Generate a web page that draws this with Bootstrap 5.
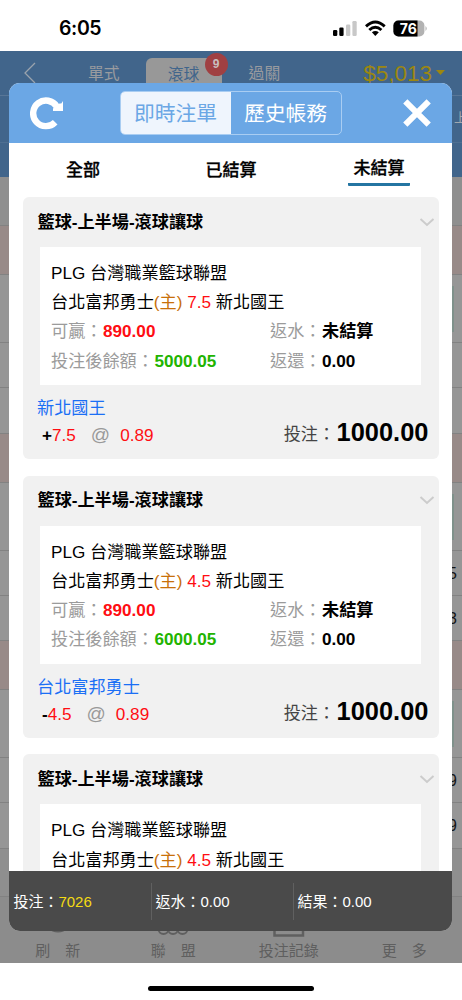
<!DOCTYPE html>
<html lang="zh-TW">
<head>
<meta charset="utf-8">
<meta name="viewport" content="width=device-width, initial-scale=1">
<title>即時注單</title>
<link rel="stylesheet" href="https://cdn.jsdelivr.net/npm/bootstrap@5.3.0/dist/css/bootstrap.min.css">
<style>
body{font-family:"Liberation Sans","Noto Sans CJK TC",sans-serif;font-size:17.15px;line-height:29px;color:#000;background:#fff}
.phone{width:462px;height:1000px}
.statusbar{height:51px;font-family:Inter,"Liberation Sans",sans-serif}
.clock{font-size:19.5px;font-weight:600;padding-left:59px;padding-top:5px;letter-spacing:-.4px}
.signals{padding-right:34px;padding-top:4px}
.app{height:912px;background:#969696}
.app-blue{height:126px;background:#41658b}
.app-nav{height:45px;padding-left:24px;font-size:15.8px;line-height:22px;color:#999b9f;border-bottom:1px solid #587697}
.app-sub{height:47px;border-bottom:1px solid #4e6f92;font-size:13px;color:#a0a8b0;padding-top:7px}
.nav-pill{width:76px;height:39px;background:#989898;color:#41658b;border-radius:6px 6px 0 0;margin-left:26px}
.count{right:-6px;top:-5px;width:23px;height:23px;background:#a04042;color:#c9bebe;font:bold 12px/23px "Liberation Sans",sans-serif}
.balance{font-size:22.5px;color:#9c8710;margin-left:83px;padding-top:2px}
.rowline{border-bottom:1px solid #828282;font-size:16px;color:#151515}
.rowline.pinkish{background:#988a88}
.rowline.plain{background:#8f8f8f}
.rowline.num{padding:8px 5px 0 0}
.teal::after{content:"";width:2px;height:46px;background:#7f918b;margin-right:8px}
.h49{height:49px}.h48{height:48px}.h68{height:68px}.h45{height:45px}.h46{height:46px}
.app-tabs{flex:1;background:#8c8c8c;color:#5f5f5f;font-size:15px;line-height:22px}
.app-tabs svg{display:block;margin:3px auto 0}
.homebar{height:37px;padding-top:23px}
.homebar div{width:166px;height:5px;border-radius:3px;background:#000}
.sheet{left:9.4px;top:83px;width:443px;height:848px;border-radius:11px;background:#fff}
.sheet-head{height:60px;background:#6ba7e5}
.seg{width:222px;height:44px;border:1px solid #a9cdf2;border-radius:5px;font-size:20.8px;line-height:43px;color:#fff;left:110.6px;top:8px}
.seg>div{padding-right:1px}
.seg .on{background:#eff5fd;color:#6ba7e5}
.filter{height:54px;font-weight:500;font-size:17px;-webkit-text-stroke:.3px #000}
.filter>div{padding-top:13px}
.filter>div:not(.cur){padding-right:1px}
.filter .cur{padding-top:11px}
.filter .cur span{display:inline-block;width:62px;height:32px;border-bottom:3px solid #2475a2;border-radius:1px}
.tickets{height:674px;padding:0 13px 0 13.6px}
.ticket{height:262.4px;margin-bottom:16.3px;border-radius:6px;background:#f1f1f1;flex:none}
.ticket-head{height:50px;padding:10.6px 4px 0 14.5px;font-weight:bold}
.ticket-head svg{margin-top:10px}
.slip{margin:0 18px 0 17.5px;height:138px;padding:12px 0 0 10.5px;background:#fff;line-height:29.2px}
.slip b{margin-left:.6px}
.tag{color:#9b9b9b}
.left-col{width:219px}
.pick{padding:9px 11px 0 14px}
.pick-name{color:#1b6ff5}
.pick-line{line-height:27px;height:26px;margin-top:-2px}
.pick-odds{padding-left:5px}
.stake-tag{color:#444;margin-right:1.5px}
.rd{color:#ff0d12}.gn{color:#22b400}.host{color:#c8700a}
.at{color:#999;font-size:19px;margin:0 10px 0 15px}
.stake{font-size:25.4px;margin-top:-2px}
.sheet-foot{height:60px;background:#4a4a4a;color:#fff;font-size:15px;line-height:37px;padding:12px 0 11px 0}
.sheet-foot>div{width:142px;padding-left:4px}
.sheet-foot>div+div{border-left:1px solid #606060;padding-left:3px}
.gold{color:#f4da13}
</style>
</head>
<body>
<div class="phone position-relative overflow-hidden d-flex flex-column">
  <div class="statusbar d-flex justify-content-between align-items-center">
    <div class="clock">6:05</div>
    <svg class="signals" width="129" height="24" viewBox="0 0 95 20">
      <rect x="0" y="12" width="4.3" height="6" rx="1.2"/><rect x="6.3" y="9.5" width="4.3" height="8.5" rx="1.2"/>
      <rect x="13" y="6.5" width="4.3" height="11.5" rx="1.2" fill="#c8c8c8"/><rect x="19.4" y="3" width="4.3" height="15" rx="1.2" fill="#c8c8c8"/>
      <g fill="none" stroke="#000" stroke-width="2.9"><path d="M33 8.4Q42.3-.3 51.7 8.4"/><path d="M36.3 12Q42.3 6.4 48.4 12"/></g><path d="M38.9 14.3Q42.3 11.7 45.8 14.3L42.3 18z"/>
      <rect x="60.4" y="2.5" width="31" height="16" rx="5" fill="#b2b2b2"/><path d="M65.4 2.5H84.5V18.5H65.4A5 5 0 0 1 60.4 13.5V7.5A5 5 0 0 1 65.4 2.5z"/><path d="M92.5 8Q95 10.5 92.5 13z" fill="#b2b2b2"/>
      <text x="75.3" y="15.6" font-size="14" font-weight="700" fill="#fff" text-anchor="middle">76</text>
    </svg>
  </div>

  <div class="app d-flex flex-column">
    <div class="app-blue">
      <div class="app-nav d-flex align-items-center">
        <svg width="12" height="22" fill="none" stroke="#9aa3ad" stroke-width="1.3"><path d="M11 1 1 11 11 21"/></svg>
        <div style="margin-left:52px;padding-top:2px">單式</div>
        <div class="nav-pill position-relative text-center mt-2"><div style="padding-top:6px">滾球</div><span class="count position-absolute rounded-circle text-center">9</span></div>
        <div style="margin-left:27px;padding-top:2px">過關</div>
        <div class="balance">$5,013</div>
        <svg width="10" height="6" style="margin-left:4px"><path d="M0 0h9L4.5 5z" fill="#9c8710"/></svg>
      </div>
      <div class="app-sub text-end overflow-hidden"><span style="margin-right:-5px">上</span></div>
    </div>
    <div class="rowline plain h49"></div>
    <div class="rowline pinkish h49"></div>
    <div class="rowline h68 teal d-flex justify-content-end align-items-center"></div>
    <div class="rowline h45"></div>
    <div class="rowline h46"></div>
    <div class="rowline pinkish h49"></div>
    <div class="rowline h68 teal d-flex justify-content-end align-items-center"></div>
    <div class="rowline h45 text-end num">5</div>
    <div class="rowline h45 text-end num">3</div>
    <div class="rowline pinkish h49"></div>
    <div class="rowline h68 teal d-flex justify-content-end align-items-center"></div>
    <div class="rowline h45 text-end num">9</div>
    <div class="rowline h46 text-end num">9</div>
    <div class="rowline plain h48"></div>
    <div class="app-tabs row g-0 text-center">
      <div class="col"><svg width="32" height="40" fill="none" stroke="#5f5f5f" stroke-width="3"><circle cx="16" cy="18.5" r="12.5"/></svg>刷　新</div>
      <div class="col"><svg width="32" height="40" fill="none" stroke="#5f5f5f" stroke-width="2"><circle cx="6.5" cy="29" r="5"/><circle cx="16" cy="29" r="5"/><circle cx="25.5" cy="29" r="5"/></svg>聯　盟</div>
      <div class="col"><svg width="32" height="40" fill="none" stroke="#5f5f5f" stroke-width="2.5"><path d="M1.5 5H30V35.5H1.5z"/></svg>投注記錄</div>
      <div class="col"><svg width="32" height="40"></svg>更　多</div>
    </div>
  </div>
  <div class="homebar d-flex justify-content-center"><div></div></div>

  <div class="sheet position-absolute overflow-hidden">
    <div class="sheet-head position-relative d-flex justify-content-between align-items-center">
      <svg width="34" height="34" viewBox="0 0 34 34" style="margin-left:20.5px"><path d="M25.2 26.2A12.8 12.8 0 1 1 26.8 10.5" fill="none" stroke="#fff" stroke-width="6.4"/><path d="M33 5V15H23V12.6L29.5 7.6 31.3 7.6z" fill="#fff"/></svg>
      <div class="seg position-absolute d-flex text-center overflow-hidden"><div class="on w-50">即時注單</div><div class="w-50">歷史帳務</div></div>
      <svg width="30" height="30" style="margin-right:20px" fill="none" stroke="#fff" stroke-width="6"><path d="M3.3 3.3 26.7 26.7M26.7 3.3 3.3 26.7"/></svg>
    </div>
    <div class="filter row g-0 text-center">
      <div class="col">全部</div><div class="col">已結算</div><div class="col cur"><span>未結算</span></div>
    </div>
    <div class="tickets d-flex flex-column overflow-hidden">
      <div class="ticket">
        <div class="ticket-head d-flex justify-content-between"><span>籃球-上半場-滾球讓球</span><svg width="16" height="9" fill="none" stroke="#ccc" stroke-width="2"><path d="M1.5 1 8 7 14.5 1"/></svg></div>
        <div class="slip">
          <div>PLG 台灣職業籃球聯盟</div>
          <div>台北富邦勇士<span class="host">(主)</span> <span class="rd">7.5</span> 新北國王</div>
          <div class="d-flex"><div class="left-col"><span class="tag">可贏：</span><b class="rd">890.00</b></div><div><span class="tag">返水：</span><b>未結算</b></div></div>
          <div class="d-flex"><div class="left-col"><span class="tag">投注後餘額：</span><b class="gn">5000.05</b></div><div><span class="tag">返還：</span><b>0.00</b></div></div>
        </div>
        <div class="pick">
          <div class="pick-name">新北國王</div>
          <div class="pick-line d-flex justify-content-between"><div class="pick-odds"><b>+</b><span class="rd">7.5</span><span class="at">@</span><span class="rd">0.89</span></div><div class="d-flex"><span class="stake-tag">投注：</span><b class="stake">1000.00</b></div></div>
        </div>
      </div>
      <div class="ticket">
        <div class="ticket-head d-flex justify-content-between"><span>籃球-上半場-滾球讓球</span><svg width="16" height="9" fill="none" stroke="#ccc" stroke-width="2"><path d="M1.5 1 8 7 14.5 1"/></svg></div>
        <div class="slip">
          <div>PLG 台灣職業籃球聯盟</div>
          <div>台北富邦勇士<span class="host">(主)</span> <span class="rd">4.5</span> 新北國王</div>
          <div class="d-flex"><div class="left-col"><span class="tag">可贏：</span><b class="rd">890.00</b></div><div><span class="tag">返水：</span><b>未結算</b></div></div>
          <div class="d-flex"><div class="left-col"><span class="tag">投注後餘額：</span><b class="gn">6000.05</b></div><div><span class="tag">返還：</span><b>0.00</b></div></div>
        </div>
        <div class="pick">
          <div class="pick-name">台北富邦勇士</div>
          <div class="pick-line d-flex justify-content-between"><div class="pick-odds"><b>-</b><span class="rd">4.5</span><span class="at">@</span><span class="rd">0.89</span></div><div class="d-flex"><span class="stake-tag">投注：</span><b class="stake">1000.00</b></div></div>
        </div>
      </div>
      <div class="ticket">
        <div class="ticket-head d-flex justify-content-between"><span>籃球-上半場-滾球讓球</span><svg width="16" height="9" fill="none" stroke="#ccc" stroke-width="2"><path d="M1.5 1 8 7 14.5 1"/></svg></div>
        <div class="slip">
          <div>PLG 台灣職業籃球聯盟</div>
          <div>台北富邦勇士<span class="host">(主)</span> <span class="rd">4.5</span> 新北國王</div>
        </div>
      </div>
    </div>
    <div class="sheet-foot d-flex"><div>投注：<span class="gold">7026</span></div><div>返水：0.00</div><div>結果：0.00</div></div>
  </div>
</div>
<script src="https://cdn.jsdelivr.net/npm/bootstrap@5.3.0/dist/js/bootstrap.bundle.min.js"></script>
</body>
</html>
